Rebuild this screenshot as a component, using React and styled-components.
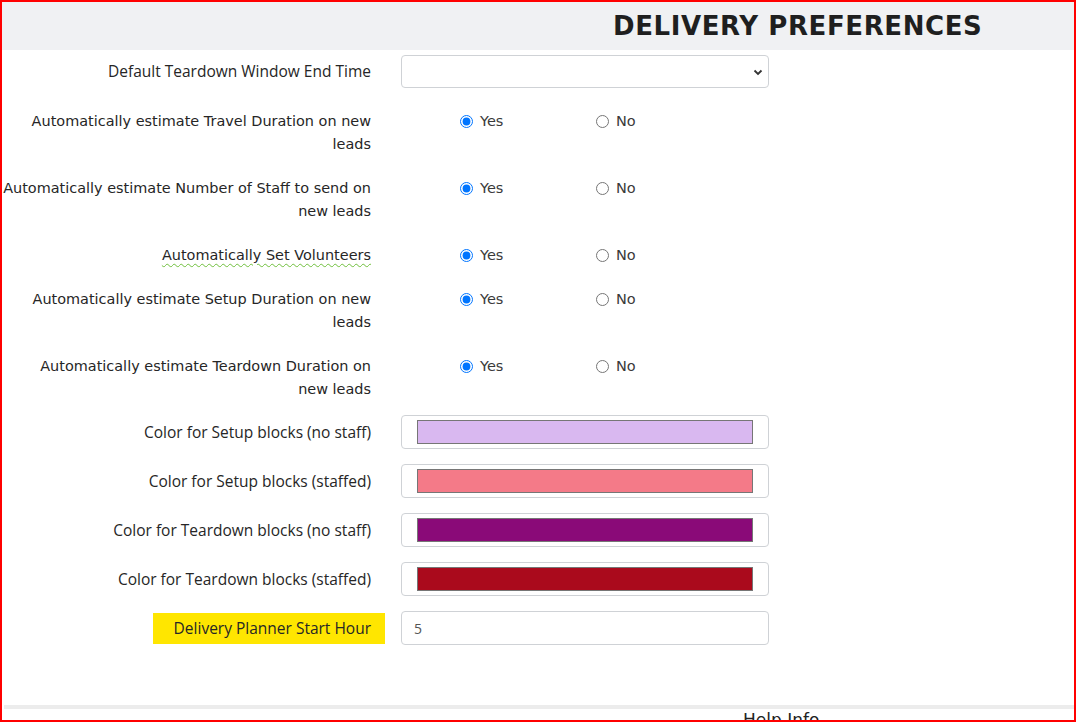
import styled, { createGlobalStyle } from "styled-components";

const GlobalStyle = createGlobalStyle`
  html, body {
    margin: 0;
    padding: 0;
    background: #ffffff;
  }
  * {
    box-sizing: border-box;
  }
`;

const Frame = styled.div`
  width: 1076px;
  height: 722px;
  border: 2px solid #ff0000;
  overflow: hidden;
  background: #ffffff;
  font-family: "DejaVu Sans", sans-serif;
  color: #2a2a2a;
`;

const Header = styled.div`
  height: 48px;
  background: #f0f1f3;
  display: flex;
  align-items: center;
  padding-left: 611px;
`;

const Title = styled.h1`
  margin: 0;
  font-family: "DejaVu Sans", sans-serif;
  font-weight: 600;
  font-size: 26px;
  letter-spacing: 0.6px;
  color: #1f1f1f;
`;

const Row = styled.div`
  display: grid;
  grid-template-columns: 369px 368px;
  column-gap: 30px;
  align-items: ${(p) => (p.$top ? "start" : "center")};
  margin-top: ${(p) => p.$mt}px;
`;

const Label = styled.div`
  text-align: right;
  font-size: ${(p) => (p.$narrow ? "15.5px" : "14.45px")};
  font-family: ${(p) =>
    p.$narrow ? '"Open Sans", sans-serif' : '"DejaVu Sans", sans-serif'};
  line-height: 23px;
  color: #262626;
  white-space: nowrap;
`;

const Squiggle = styled.span`
  text-decoration: underline wavy #6fbf3c;
  text-decoration-thickness: 1px;
  text-underline-offset: 3px;
`;

const Highlight = styled.span`
  display: inline-block;
  background: #ffe600;
  padding: 4px 14px 4px 21px;
  margin-right: -14px;
`;

const SelectBox = styled.div`
  height: 33px;
  border: 1px solid #cfd2d6;
  border-radius: 4px;
  display: flex;
  align-items: center;
  justify-content: flex-end;
  padding-right: 5px;
`;

const RadioGroup = styled.div`
  display: flex;
  padding-left: 59px;
  height: 23px;
  align-items: center;
`;

const Option = styled.label`
  display: flex;
  align-items: center;
  width: 136px;
  font-size: 14.5px;
  color: #3a3a3a;

  input {
    margin: 0 7px 0 0;
    width: 13px;
    height: 13px;
  }
`;

const ColorBox = styled.div`
  height: 34px;
  border: 1px solid #cfd2d6;
  border-radius: 4px;
  padding: 4px 15px;
`;

const Swatch = styled.div`
  height: 24px;
  border: 1px solid #767676;
  background: ${(p) => p.$color};
`;

const TextInput = styled.div`
  height: 34px;
  border: 1px solid #cfd2d6;
  border-radius: 4px;
  padding-left: 12px;
  display: flex;
  align-items: center;
  font-family: "Open Sans", sans-serif;
  font-size: 14px;
  color: #555;
`;

const Divider = styled.div`
  margin-top: 60px;
  margin-left: 2px;
  height: 4px;
  background: #ececec;
`;

const HelpInfo = styled.div`
  padding-left: 741px;
  font-size: 17px;
  line-height: 22px;
  color: #222;
`;

function Chevron() {
  return (
    <svg width="10" height="8" viewBox="0 0 10 8">
      <path d="M1.5 2.5 L5 6 L8.5 2.5" fill="none" stroke="#333" strokeWidth="1.8" />
    </svg>
  );
}

function YesNo({ name }) {
  return (
    <RadioGroup>
      <Option>
        <input type="radio" name={name} defaultChecked />
        Yes
      </Option>
      <Option>
        <input type="radio" name={name} />
        No
      </Option>
    </RadioGroup>
  );
}

const radioRows = [
  ["travel", ["Automatically estimate Travel Duration on new", "leads"]],
  ["staff", ["Automatically estimate Number of Staff to send on", "new leads"]],
  ["volunteers", null],
  ["setup", ["Automatically estimate Setup Duration on new", "leads"]],
  ["teardown", ["Automatically estimate Teardown Duration on", "new leads"]],
];

const colorRows = [
  ["Color for Setup blocks (no staff)", "#d9b8f0"],
  ["Color for Setup blocks (staffed)", "#f47a88"],
  ["Color for Teardown blocks (no staff)", "#8a0a78"],
  ["Color for Teardown blocks (staffed)", "#aa0a1c"],
];

export default function App() {
  return (
    <Frame>
      <GlobalStyle />
      <Header>
        <Title>DELIVERY PREFERENCES</Title>
      </Header>

      <Row $mt={5}>
        <Label $narrow>Default Teardown Window End Time</Label>
        <SelectBox>
          <Chevron />
        </SelectBox>
      </Row>

      {radioRows.map(([key, lines], i) => (
        <Row key={key} $top $mt={i === 0 ? 21.5 : 21}>
          <Label>
            {lines ? (
              <>
                {lines[0]}
                <br />
                {lines[1]}
              </>
            ) : (
              <Squiggle>Automatically Set Volunteers</Squiggle>
            )}
          </Label>
          <YesNo name={key} />
        </Row>
      ))}

      {colorRows.map(([label, color], i) => (
        <Row key={label} $mt={i === 0 ? 14.5 : 15}>
          <Label $narrow>{label}</Label>
          <ColorBox>
            <Swatch $color={color} />
          </ColorBox>
        </Row>
      ))}

      <Row $mt={15}>
        <Label $narrow>
          <Highlight>Delivery Planner Start Hour</Highlight>
        </Label>
        <TextInput>5</TextInput>
      </Row>

      <Divider />
      <HelpInfo>Help Info</HelpInfo>
    </Frame>
  );
}
